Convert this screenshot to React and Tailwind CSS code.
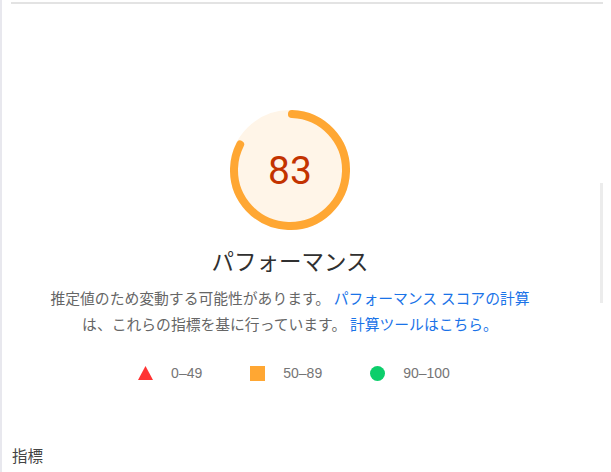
const Gauge = ({ score }) => {
  const r = 56;
  const c = 2 * Math.PI * r;
  return (
    <svg width="120" height="120" viewBox="0 0 120 120">
      <circle cx="60" cy="60" r={r} fill="#fff5e8" stroke="#fff5e8" strokeWidth="8" />
      <circle
        cx="60"
        cy="60"
        r={r}
        fill="none"
        stroke="#ffa733"
        strokeWidth="8"
        strokeLinecap="round"
        strokeDasharray={`${(score / 100) * c - 4} ${c}`}
        transform="rotate(-88 60 60)"
      />
      <text
        x="60"
        y="61"
        textAnchor="middle"
        dominantBaseline="central"
        fill="#c33300"
        fontSize="39"
        fontFamily="Roboto, sans-serif"
      >
        {score}
      </text>
    </svg>
  );
};

const legend = [
  { label: "0–49", icon: "tri" },
  { label: "50–89", icon: "sq" },
  { label: "90–100", icon: "dot" },
];

const LegendIcon = ({ type }) => {
  if (type === "tri")
    return (
      <svg width="15" height="14" viewBox="0 0 15 14">
        <polygon points="7.5,0 15,14 0,14" fill="#ff3333" />
      </svg>
    );
  if (type === "sq") return <div className="w-[15px] h-[15px] bg-[#ffa733]" />;
  return <div className="w-[15px] h-[15px] rounded-full bg-[#0cce6b]" />;
};

const App = () => {
  return (
    <div
      className="w-[611px] h-[472px] bg-white relative overflow-hidden border-l-2 border-[#e8e8ee]"
      style={{ fontFamily: 'Roboto, "Noto Sans CJK JP", sans-serif' }}
    >
      <div className="ml-[9px] mt-[2px] w-[592px] border-t-2 border-[#e3e3e3]" />

      <div className="w-[576px] flex flex-col items-center pt-[106px]">
        <Gauge score={83} />

        <h2 className="mt-[16px] text-[22.5px] leading-[32px] text-[#303030]">
          パフォーマンス
        </h2>

        <p className="mt-[8px] text-[14.8px] leading-[26px] text-[#666] text-center">
          推定値のため変動する可能性があります。{" "}
          <a className="text-[#1a73e8]">パフォーマンス スコアの計算</a>
          <br />
          は、これらの指標を基に行っています。{" "}
          <a className="text-[#1a73e8]">計算ツールはこちら。</a>
        </p>

        <div className="mt-[25px] flex items-center gap-[48px] h-[20px] pl-[8px]">
          {legend.map((l) => (
            <div key={l.label} className="flex items-center gap-[18px]">
              <LegendIcon type={l.icon} />
              <span
                className="text-[14px] text-[#757575]"
                style={{ fontFamily: '"Liberation Sans", Arial, sans-serif' }}
              >
                {l.label}
              </span>
            </div>
          ))}
        </div>
      </div>

      <div className="mt-[64px] pl-[10px] text-[15.5px] leading-[20px] text-[#444]">
        指標
      </div>

      <div className="absolute left-[598px] top-[183px] w-[3px] h-[120px] bg-[#ececec]" />
    </div>
  );
};

export default App;
